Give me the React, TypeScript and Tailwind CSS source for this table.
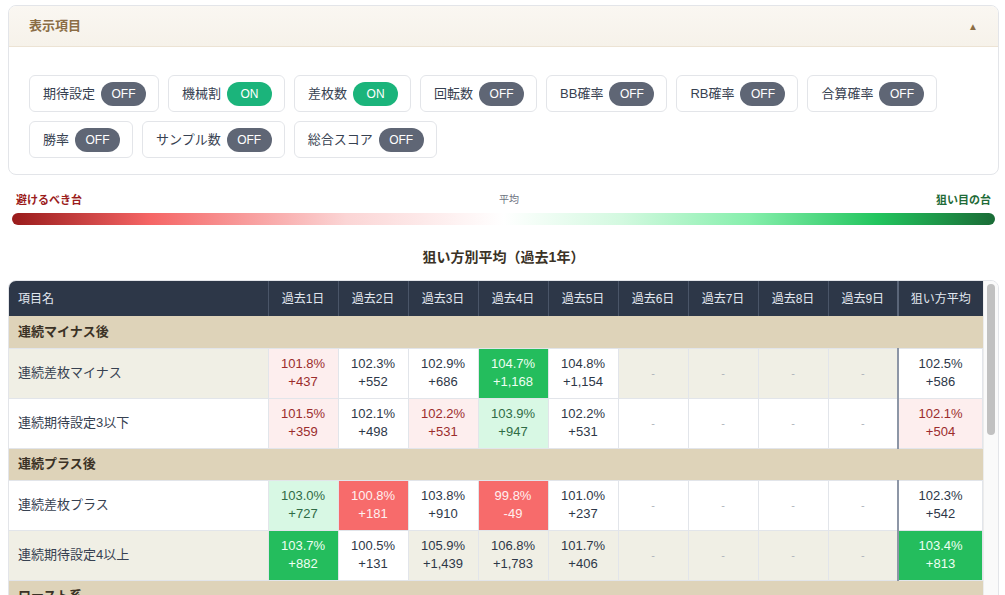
import React from "react";

type Tone = "w" | "n" | "lr" | "lg" | "sr" | "sg";
type Cell = [string, string, Tone] | null;
type Row = { name: string; striped: boolean; cells: Cell[]; avg: Cell };
type Group = { title: string; rows: Row[] };

const toggles: { label: string; on: boolean }[][] = [
  [
    { label: "期待設定", on: false },
    { label: "機械割", on: true },
    { label: "差枚数", on: true },
    { label: "回転数", on: false },
    { label: "BB確率", on: false },
    { label: "RB確率", on: false },
    { label: "合算確率", on: false },
  ],
  [
    { label: "勝率", on: false },
    { label: "サンプル数", on: false },
    { label: "総合スコア", on: false },
  ],
];

const days = ["過去1日", "過去2日", "過去3日", "過去4日", "過去5日", "過去6日", "過去7日", "過去8日", "過去9日"];

const toneClass: Record<Tone, string> = {
  w: "bg-white text-[#2d3748]",
  n: "text-[#2d3748]",
  lr: "bg-[#fdeeee] text-[#9b2c2c]",
  lg: "bg-[#d8f8e4] text-[#2f6b45]",
  sr: "bg-[#f76b6b] text-[#fff0f0]",
  sg: "bg-[#24bd5d] text-[#eefff3]",
};

const groups: Group[] = [
  {
    title: "連続マイナス後",
    rows: [
      {
        name: "連続差枚マイナス",
        striped: true,
        cells: [["101.8%", "+437", "lr"], ["102.3%", "+552", "w"], ["102.9%", "+686", "w"], ["104.7%", "+1,168", "sg"], ["104.8%", "+1,154", "w"], null, null, null, null],
        avg: ["102.5%", "+586", "w"],
      },
      {
        name: "連続期待設定3以下",
        striped: false,
        cells: [["101.5%", "+359", "lr"], ["102.1%", "+498", "w"], ["102.2%", "+531", "lr"], ["103.9%", "+947", "lg"], ["102.2%", "+531", "w"], null, null, null, null],
        avg: ["102.1%", "+504", "lr"],
      },
    ],
  },
  {
    title: "連続プラス後",
    rows: [
      {
        name: "連続差枚プラス",
        striped: false,
        cells: [["103.0%", "+727", "lg"], ["100.8%", "+181", "sr"], ["103.8%", "+910", "w"], ["99.8%", "-49", "sr"], ["101.0%", "+237", "w"], null, null, null, null],
        avg: ["102.3%", "+542", "w"],
      },
      {
        name: "連続期待設定4以上",
        striped: true,
        cells: [["103.7%", "+882", "sg"], ["100.5%", "+131", "w"], ["105.9%", "+1,439", "n"], ["106.8%", "+1,783", "n"], ["101.7%", "+406", "n"], null, null, null, null],
        avg: ["103.4%", "+813", "sg"],
      },
    ],
  },
  {
    title: "ロースト系",
    rows: [
      {
        name: "前日ロースト",
        striped: false,
        cells: [["102.6%", "+612", "w"], ["101.9%", "+452", "lr"], ["103.1%", "+744", "lg"], ["102.4%", "+570", "w"], ["101.2%", "+288", "lr"], null, null, null, null],
        avg: ["102.2%", "+533", "w"],
      },
      {
        name: "2日連続ロースト",
        striped: true,
        cells: [["103.3%", "+801", "lg"], ["102.0%", "+476", "w"], ["101.4%", "+322", "lr"], ["104.1%", "+1,012", "sg"], ["102.8%", "+664", "n"], null, null, null, null],
        avg: ["102.7%", "+655", "w"],
      },
    ],
  },
];

function Toggle({ label, on }: { label: string; on: boolean }) {
  return (
    <div className="flex h-[37px] items-center gap-[6px] rounded-md border border-[#e3e5e9] bg-white pl-[13px] pr-3">
      <span className="text-[13px] text-[#374151]">{label}</span>
      <span
        className={`flex h-6 w-[45px] items-center justify-center rounded-full text-[12px] text-white ${
          on ? "bg-[#1bb47b]" : "bg-[#5f6675]"
        }`}
      >
        {on ? "ON" : "OFF"}
      </span>
    </div>
  );
}

function ValueCell({ cell, last }: { cell: Cell; last?: boolean }) {
  const edge = last ? "border-l-2 border-l-[#8d96a6]" : "";
  if (!cell) {
    return <td className={`h-[50px] border border-[#e2e5ea] text-center text-[11px] text-[#aeb3bb] ${edge}`}>-</td>;
  }
  const [pct, diff, tone] = cell;
  return (
    <td className={`h-[50px] border border-[#e2e5ea] text-center text-[13px] leading-[18px] ${toneClass[tone]} ${edge}`}>
      <div>{pct}</div>
      <div>{diff}</div>
    </td>
  );
}

export default function App() {
  return (
    <div className="min-h-screen bg-white pl-2 pr-[6px] pt-[5px] font-['Liberation_Sans','Noto_Sans_CJK_JP',sans-serif]">
      {/* 表示項目 */}
      <div className="overflow-hidden rounded-lg border border-[#e3e5e9] bg-white">
        <div className="flex h-[41px] items-center justify-between border-b border-[#ece3d4] bg-[linear-gradient(to_bottom,#faf7f2,#f6f2ea)] px-5">
          <span className="text-[13px] font-semibold text-[#8b6d45]">表示項目</span>
          <span className="text-[10px] text-[#8b6d45]">▲</span>
        </div>
        <div className="flex flex-col gap-[9px] px-5 pb-4 pt-[28px]">
          {toggles.map((row, i) => (
            <div key={i} className="flex flex-wrap gap-[9px]">
              {row.map((t) => (
                <Toggle key={t.label} label={t.label} on={t.on} />
              ))}
            </div>
          ))}
        </div>
      </div>

      {/* legend */}
      <div className="mt-[18px] px-1">
        <div className="flex items-end justify-between px-1 leading-[14px]">
          <span className="text-[11px] font-bold text-[#9b1c1c]">避けるべき台</span>
          <span className="text-[10px] text-[#6b7280]">平均</span>
          <span className="text-[11px] font-bold text-[#1f6b38]">狙い目の台</span>
        </div>
        <div className="mt-[6px] h-3 rounded-full bg-[linear-gradient(to_right,#991b1b_0%,#f56565_14%,#fbd5d5_34%,#ffffff_50%,#d3f9e0_62%,#86efac_75%,#22c55e_88%,#1a6b36_100%)]" />
      </div>

      <h2 className="mt-[22px] text-center text-[14px] font-bold leading-5 text-[#3b3226]">狙い方別平均（過去1年）</h2>

      {/* table */}
      <div className="mt-[13px] flex h-[400px] overflow-hidden rounded-t-lg border border-[#e3e5e9]">
        <div className="min-w-0 flex-1 overflow-hidden">
          <table className="w-full table-fixed border-collapse">
            <colgroup>
              <col className="w-[259px]" />
              {days.map((d) => (
                <col key={d} className="w-[70px]" />
              ))}
              <col />
            </colgroup>
            <thead>
              <tr className="h-[35px] bg-[#2d3748] text-[12px] text-[#e2e8f0]">
                <th className="border-r border-[#4a5568] pl-[9px] text-left font-normal">項目名</th>
                {days.map((d) => (
                  <th key={d} className="border-r border-[#4a5568] text-center font-normal">
                    {d}
                  </th>
                ))}
                <th className="border-l-2 border-[#5a6578] text-center font-normal">狙い方平均</th>
              </tr>
            </thead>
            <tbody>
              {groups.map((g) => (
                <React.Fragment key={g.title}>
                  <tr className="h-[32px] bg-[#ded3b9]">
                    <td colSpan={11} className="pl-[9px] text-[13px] font-bold text-[#3b3226]">
                      {g.title}
                    </td>
                  </tr>
                  {g.rows.map((r) => (
                    <tr key={r.name} className={r.striped ? "bg-[#f0efe5]" : "bg-white"}>
                      <td className="h-[50px] border border-l-0 border-[#e2e5ea] pl-[9px] text-[13px] text-[#374151]">{r.name}</td>
                      {r.cells.map((c, i) => (
                        <ValueCell key={i} cell={c} />
                      ))}
                      <ValueCell cell={r.avg} last />
                    </tr>
                  ))}
                </React.Fragment>
              ))}
            </tbody>
          </table>
        </div>
        {/* scrollbar */}
        <div className="w-[15px] shrink-0 border-l border-[#ececec] bg-[#fafafa] px-[3px] pt-[3px]">
          <div className="h-[151px] rounded-full bg-[#c1c1c1]" />
        </div>
      </div>
    </div>
  );
}
